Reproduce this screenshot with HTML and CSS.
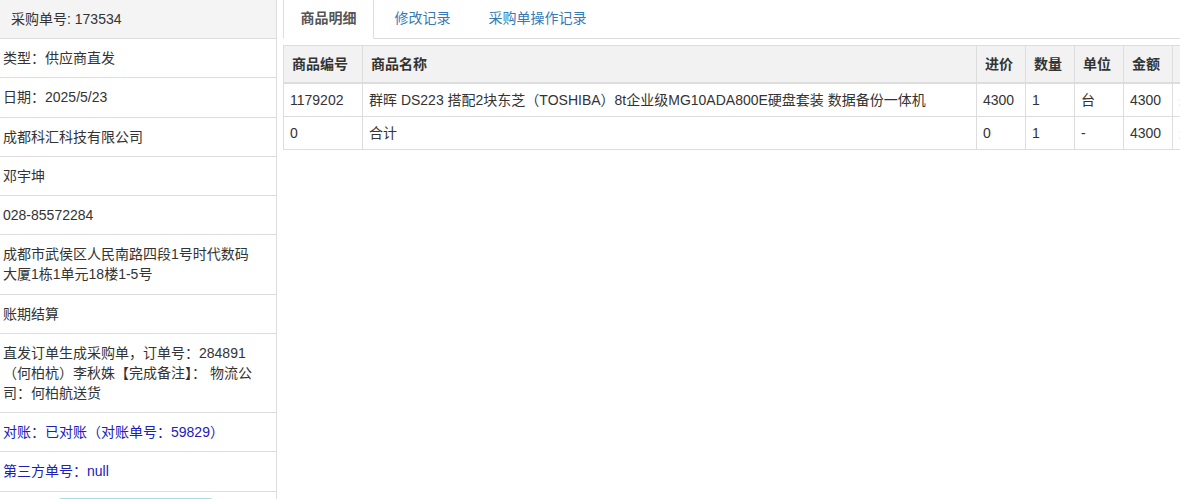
FILE: index.html
```html
<!DOCTYPE html>
<html lang="zh-CN">
<head>
<meta charset="utf-8">
<title>采购单详情</title>
<link rel="stylesheet" href="styles.css">
</head>
<body>
<div class="page">
  <aside class="side">
    <div class="side-head">采购单号: 173534</div>
    <div class="side-row">类型：供应商直发</div>
    <div class="side-row">日期：2025/5/23</div>
    <div class="side-row">成都科汇科技有限公司</div>
    <div class="side-row">邓宇坤</div>
    <div class="side-row">028-85572284</div>
    <div class="side-row">成都市武侯区人民南路四段1号时代数码大厦1栋1单元18楼1-5号</div>
    <div class="side-row">账期结算</div>
    <div class="side-row">直发订单生成采购单，订单号：284891（何柏杭）李秋姝【完成备注】： 物流公司：何柏航送货</div>
    <div class="side-row blue">对账：已对账（对账单号：59829）</div>
    <div class="side-row blue">第三方单号：null</div>
    <div class="side-foot"><button class="btn-info" type="button" aria-label="操作"></button></div>
  </aside>
  <main class="main">
    <ul class="tabs">
      <li class="tab active">商品明细</li>
      <li class="tab">修改记录</li>
      <li class="tab">采购单操作记录</li>
    </ul>
    <table class="grid">
      <colgroup>
        <col class="c-no"><col class="c-name"><col class="c-s"><col class="c-s"><col class="c-s"><col class="c-s"><col class="c-last">
      </colgroup>
      <thead>
        <tr><th>商品编号</th><th>商品名称</th><th>进价</th><th>数量</th><th>单位</th><th>金额</th><th>状态</th></tr>
      </thead>
      <tbody>
        <tr><td>1179202</td><td>群晖 DS223 搭配2块东芝（TOSHIBA）8t企业级MG10ADA800E硬盘套装 数据备份一体机</td><td>4300</td><td>1</td><td>台</td><td>4300</td><td class="warn">未付款</td></tr>
        <tr><td>0</td><td>合计</td><td>0</td><td>1</td><td>-</td><td>4300</td><td class="warn">未付款</td></tr>
      </tbody>
    </table>
  </main>
</div>
</body>
</html>
```

FILE: styles.css
```css
html, body {
  margin: 0;
  padding: 0;
  background: #fff;
  overflow: hidden;
}
body {
  font-family: "Liberation Sans", Arial, "Noto Sans CJK SC", sans-serif;
  font-size: 14px;
  line-height: 20px;
  color: #333;
}
.page {
  display: flex;
  min-height: 100vh;
}
.side {
  width: 276px;
  flex: 0 0 276px;
  border-right: 1px solid #ddd;
}
.side-head {
  background: #f4f4f4;
  padding: 9px 11px 9px 11px;
  border-bottom: 1px solid #ddd;
}
.side-row {
  padding: 9px 15px 9.25px 3px;
  border-bottom: 1px solid #ddd;
}
.side-row.blue {
  color: #2020b8;
}
.side-foot {
  padding: 6px 0 0 58px;
}
.btn-info {
  display: block;
  width: 155px;
  height: 30px;
  border: 1px solid #a9dde4;
  border-radius: 3px;
  background: #e9f7f9;
}
.main {
  flex: 1;
  min-width: 0;
  padding-left: 6px;
  overflow: hidden;
}
.tabs {
  list-style: none;
  margin: -3px 0 0 0;
  padding: 0;
  display: flex;
  border-bottom: 1px solid #ddd;
}
.tab {
  padding: 10px 16.5px;
  margin-right: 3px;
  margin-bottom: -1px;
  border: 1px solid transparent;
  color: #337ab7;
}
.tab.active {
  color: #555;
  font-weight: bold;
  background: #fff;
  border-color: #ddd #ddd transparent #ddd;
}
.grid {
  margin-top: 6px;
  border-collapse: collapse;
  table-layout: fixed;
  width: 970px;
  border: 1px solid #ddd;
}
.c-no { width: 79px; }
.c-name { width: 614px; }
.c-s { width: 49px; }
.c-last { width: 80px; }
.grid th {
  background: #f2f2f2;
  text-align: left;
  font-weight: bold;
  padding: 8px 8px;
  border: 1px solid #ddd;
  border-bottom: 2px solid #ddd;
  white-space: nowrap;
  overflow: hidden;
}
.grid td {
  padding: 6px 6px;
  border: 1px solid #ddd;
  white-space: nowrap;
  overflow: hidden;
}
.grid td.warn {
  color: #c09853;
}
```
